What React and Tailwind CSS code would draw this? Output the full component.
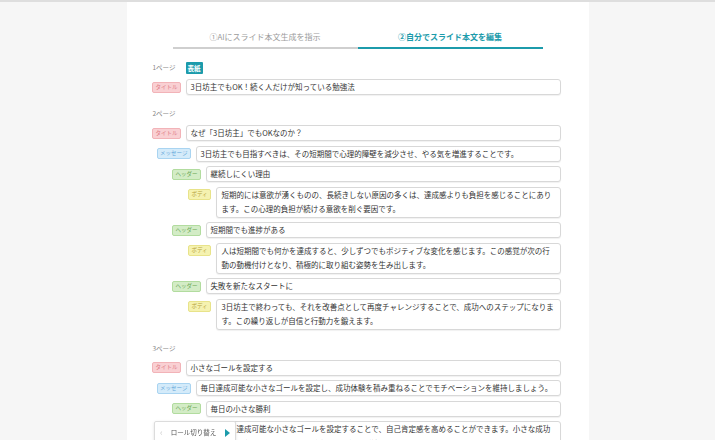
import React from 'react';

const FONT = { fontFamily: '"Noto Sans CJK JP", "Noto Sans", sans-serif' };

const ROLES = {
  title: { label: 'タイトル', col: 'w-[28px]', badge: 'bg-[#f9d0d3] border-[#f2b3b8] text-[#e07b85]' },
  message: { label: 'メッセージ', col: 'w-[38px]', badge: 'bg-[#d4ebfa] border-[#a9d4f1] text-[#5fa5d8]' },
  header: { label: 'ヘッダー', col: 'w-[48px]', badge: 'bg-[#d3ecc6] border-[#b2dc9f] text-[#6aa855]' },
  body: { label: 'ボディ', col: 'w-[58px]', badge: 'bg-[#f5f2b0] border-[#e8e38a] text-[#b5a23c]' },
};

const pages = [
  {
    label: '1ページ',
    cover: true,
    rows: [{ role: 'title', text: '3日坊主でもOK！続く人だけが知っている勉強法' }],
  },
  {
    label: '2ページ',
    rows: [
      { role: 'title', text: 'なぜ「3日坊主」でもOKなのか？' },
      { role: 'message', text: '3日坊主でも目指すべきは、その短期間で心理的障壁を減少させ、やる気を増進することです。' },
      { role: 'header', text: '継続しにくい理由' },
      { role: 'body', text: '短期的には意欲が湧くものの、長続きしない原因の多くは、達成感よりも負担を感じることにあります。この心理的負担が続ける意欲を削ぐ要因です。' },
      { role: 'header', text: '短期間でも進捗がある' },
      { role: 'body', text: '人は短期間でも何かを達成すると、少しずつでもポジティブな変化を感じます。この感覚が次の行動の動機付けとなり、積極的に取り組む姿勢を生み出します。' },
      { role: 'header', text: '失敗を新たなスタートに' },
      { role: 'body', text: '3日坊主で終わっても、それを改善点として再度チャレンジすることで、成功へのステップになります。この繰り返しが自信と行動力を鍛えます。' },
    ],
  },
  {
    label: '3ページ',
    rows: [
      { role: 'title', text: '小さなゴールを設定する' },
      { role: 'message', text: '毎日達成可能な小さなゴールを設定し、成功体験を積み重ねることでモチベーションを維持しましょう。' },
      { role: 'header', text: '毎日の小さな勝利' },
      { role: 'body', text: '毎日達成可能な小さなゴールを設定することで、自己肯定感を高めることができます。小さな成功体験を積み重ねることで、前向きな気持ちが続きます。' },
    ],
  },
];

function Row({ role, text }) {
  const r = ROLES[role];
  const isBody = role === 'body';
  return (
    <div className="flex gap-[5px]">
      <div className={`${r.col} shrink-0 flex justify-end`}>
        <span
          className={`mt-[2.5px] h-[11px] px-[2px] border rounded-[2px] text-[5.5px] leading-[9px] whitespace-nowrap ${r.badge}`}
        >
          {r.label}
        </span>
      </div>
      <div
        className={`flex-1 min-w-0 bg-white border border-[#d8d8d8] rounded-[3px] shadow-[0_1px_1px_rgba(0,0,0,0.06)] px-[4px] text-[7.5px] text-[#333] ${
          isBody ? 'leading-[14.5px] pl-[5px]' : 'leading-[14px] whitespace-nowrap overflow-hidden'
        }`}
      >
        {text}
      </div>
    </div>
  );
}

export default function App() {
  return (
    <div className="min-h-[440px] bg-[#f6f6f6] border-t-2 border-[#dedede] flex justify-center" style={FONT}>
      <div className="w-[462px] bg-white pt-[29px] pb-[40px] relative">
        {/* tabs */}
        <div className="mx-[46px] flex">
          <div className="flex-1 text-center text-[8px] leading-[12px] text-[#9b9b9b] pb-[4px] border-b-2 border-[#cfcfcf]">
            ①AIにスライド本文生成を指示
          </div>
          <div className="flex-1 text-center text-[8px] leading-[12px] font-bold text-[#1c9bab] pb-[4px] border-b-2 border-[#1c9bab]">
            ②自分でスライド本文を編集
          </div>
        </div>

        <div className="pl-[26px] pr-[28px]">
          {pages.map((p) => (
            <div key={p.label} className="mt-[13px]">
              <div className="flex gap-[5px] items-center h-[12px] mb-[5px]">
                <div className="w-[28px] text-[6.5px] text-[#888] whitespace-nowrap">{p.label}</div>
                {p.cover && (
                  <span className="h-[12px] px-[2px] bg-[#1c9bab] text-white font-bold text-[6.5px] leading-[12px] rounded-[1px]">
                    表紙
                  </span>
                )}
              </div>
              <div className="flex flex-col gap-[4.5px]">
                {p.rows.map((r, i) => (
                  <Row key={i} role={r.role} text={r.text} />
                ))}
              </div>
            </div>
          ))}
        </div>

        {/* role switcher */}
        <div className="fixed top-[421px] left-[154px] w-[82px] h-[24px] bg-white border border-[#dcdcdc] rounded-[2px] shadow-[0_1px_3px_rgba(0,0,0,0.12)] flex items-center px-[5px]">
          <span className="text-[9px] leading-[12px] text-[#cfcfcf]">‹</span>
          <span className="ml-[8px] text-[6.5px] text-[#555] whitespace-nowrap">ロール切り替え</span>
          <svg className="ml-auto" width="5" height="8" viewBox="0 0 5 8">
            <polygon points="0,0 5,4 0,8" fill="#1c9bab" />
          </svg>
        </div>
      </div>
    </div>
  );
}
